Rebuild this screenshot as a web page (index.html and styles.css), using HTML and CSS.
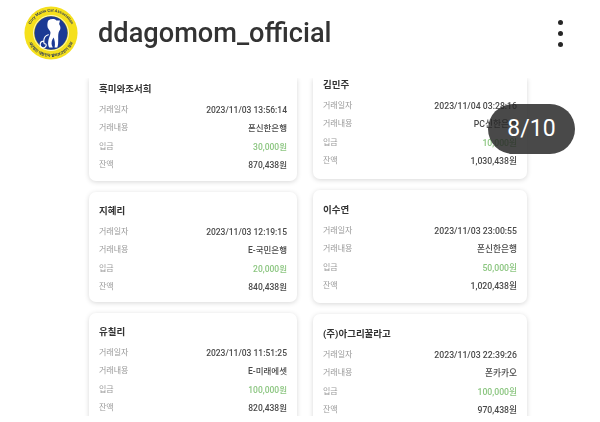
FILE: index.html
```html
<!DOCTYPE html>
<html lang="ko">
<head>
<meta charset="utf-8">
<title>ddagomom_official</title>
<link rel="stylesheet" href="styles.css">
</head>
<body>
<header class="top">
  <svg class="logo" viewBox="0 0 60 60" aria-hidden="true">
    <circle cx="30" cy="30" r="29.500" fill="#f5e01c"/>
    <circle cx="30" cy="30" r="18.500" fill="#1c3a94"/>
    <circle cx="30" cy="30" r="19.500" fill="none" stroke="#fff" stroke-width=".8"/>
    <defs>
      <path id="arcTop" d="M5.500 36 A25 25 0 1 1 54.500 36"/>
      <path id="arcBottom" d="M3.500 33 A26.700 26.700 0 0 0 56.500 33"/>
    </defs>
    <text class="ring"><textPath href="#arcTop" startOffset="50%" text-anchor="middle">Cory Mania Cat Association</textPath></text>
    <text class="ring ring-ko"><textPath href="#arcBottom" startOffset="50%" text-anchor="middle">사단법인 대한민국 딸바보고양이 협회</textPath></text>
    <path d="M27 16c3-2 7-2 9 0l4 0-1 4c2 3 2 6 0 8-1 2-1 5-1 8 0 4 0 8-1 10h-3c1-4 0-8-1-11-2 2-3 6-2 9l1 2h-4c-2-3-1-8 0-11 1-3 2-5 1-7-1-2-3-3-3-6 0-2 0-4 1-6z" fill="#fff"/>
    <path d="M27 32c-3 1-5 4-5 7-3 0-4 2-4 4 0 3 3 4 5 3 2-1 2-3 1-4M22 39c0 2 0 3 1 3" fill="none" stroke="#fff" stroke-width="1.300" stroke-linecap="round"/>
  </svg>
  <h1 class="name">ddagomom_official</h1>
  <div class="more" aria-hidden="true"><span></span><span></span><span></span></div>
</header>
<main class="feed">
  <section class="col col-left">
    <article class="card card-first">
      <h2>흑미와조서희</h2>
      <dl>
        <div><dt>거래일자</dt><dd>2023/11/03 13:56:14</dd></div>
        <div><dt>거래내용</dt><dd>폰신한은행</dd></div>
        <div><dt>입금</dt><dd class="in">30,000원</dd></div>
        <div><dt>잔액</dt><dd>870,438원</dd></div>
      </dl>
    </article>
    <article class="card">
      <h2>지혜리</h2>
      <dl>
        <div><dt>거래일자</dt><dd>2023/11/03 12:19:15</dd></div>
        <div><dt>거래내용</dt><dd>E-국민은행</dd></div>
        <div><dt>입금</dt><dd class="in">20,000원</dd></div>
        <div><dt>잔액</dt><dd>840,438원</dd></div>
      </dl>
    </article>
    <article class="card">
      <h2>유칠리</h2>
      <dl>
        <div><dt>거래일자</dt><dd>2023/11/03 11:51:25</dd></div>
        <div><dt>거래내용</dt><dd>E-미래에셋</dd></div>
        <div><dt>입금</dt><dd class="in">100,000원</dd></div>
        <div><dt>잔액</dt><dd>820,438원</dd></div>
      </dl>
    </article>
  </section>
  <section class="col col-right">
    <article class="card card-first">
      <h2>김민주</h2>
      <dl>
        <div><dt>거래일자</dt><dd>2023/11/04 03:28:16</dd></div>
        <div><dt>거래내용</dt><dd>PC신한은행</dd></div>
        <div><dt>입금</dt><dd class="in">10,000원</dd></div>
        <div><dt>잔액</dt><dd>1,030,438원</dd></div>
      </dl>
    </article>
    <article class="card">
      <h2>이수연</h2>
      <dl>
        <div><dt>거래일자</dt><dd>2023/11/03 23:00:55</dd></div>
        <div><dt>거래내용</dt><dd>폰신한은행</dd></div>
        <div><dt>입금</dt><dd class="in">50,000원</dd></div>
        <div><dt>잔액</dt><dd>1,020,438원</dd></div>
      </dl>
    </article>
    <article class="card">
      <h2>(주)아그리꿀라고</h2>
      <dl>
        <div><dt>거래일자</dt><dd>2023/11/03 22:39:26</dd></div>
        <div><dt>거래내용</dt><dd>폰카카오</dd></div>
        <div><dt>입금</dt><dd class="in">100,000원</dd></div>
        <div><dt>잔액</dt><dd>970,438원</dd></div>
      </dl>
    </article>
  </section>
</main>
<div class="pager">8/10</div>
</body>
</html>
```
FILE: styles.css
```css
* { box-sizing: border-box; margin: 0; padding: 0; }
html, body { width: 600px; height: 422px; overflow: hidden; background: #fff; }
body { font-family: "Roboto", "Noto Sans CJK KR", sans-serif; color: #333; }

.top {
  height: 78px;
  padding: 0 37px 12px 24px;
  display: flex;
  align-items: center;
}
.logo { width: 54px; height: 54px; flex: none; filter: blur(.4px); }
.ring { font: 700 4.300px "Liberation Sans", sans-serif; fill: #20305f; }
.ring-ko { font: 700 3.900px "Noto Sans CJK KR", sans-serif; }
.name {
  margin-left: 20px;
  font-size: 27.200px;
  font-weight: 500;
  color: #333;
  flex: 1;
  filter: blur(.3px);
}
.more { display: flex; flex-direction: column; gap: 6px; }
.more span { width: 5px; height: 5px; border-radius: 50%; background: #262626; }

.feed {
  height: 338px;
  overflow: hidden;
  padding-left: 89px;
  display: flex;
  gap: 16px;
  filter: blur(.5px);
}
.col { display: flex; flex-direction: column; gap: 11px; }
.col-left { width: 208px; }
.col-right { width: 214px; }

.card {
  flex: none;
  height: 110px;
  padding: 12px 10px 0;
  border-radius: 7px;
  background: #fff;
  box-shadow: 0 1px 5px rgba(0, 0, 0, .16);
}
.col-right .card { height: 113px; padding-top: 13px; }
.card-first { height: 103px !important; padding-top: 4px !important; border-radius: 0 0 7px 7px; }
.col-right .card-first { height: 101px !important; padding-top: 0 !important; }

h2 { font-size: 9.500px; font-weight: 700; line-height: 13px; color: #333; }
dl { margin-top: 8px; display: flex; flex-direction: column; gap: 4.300px; }
dl div { display: flex; justify-content: space-between; height: 14px; line-height: 14px; }
dt { font-size: 8px; color: #999; }
dd { font-size: 8.500px; font-weight: 500; color: #4a4a4a; }
.col-right dd { font-size: 8.700px; }
dd.in { color: #8cc681; }

.pager {
  position: absolute;
  left: 488px;
  top: 104px;
  width: 87px;
  height: 50px;
  border-radius: 25px;
  background: rgba(38, 38, 38, .84);
  color: #fff;
  font-size: 23px;
  line-height: 50px;
  text-align: center;
}
```
